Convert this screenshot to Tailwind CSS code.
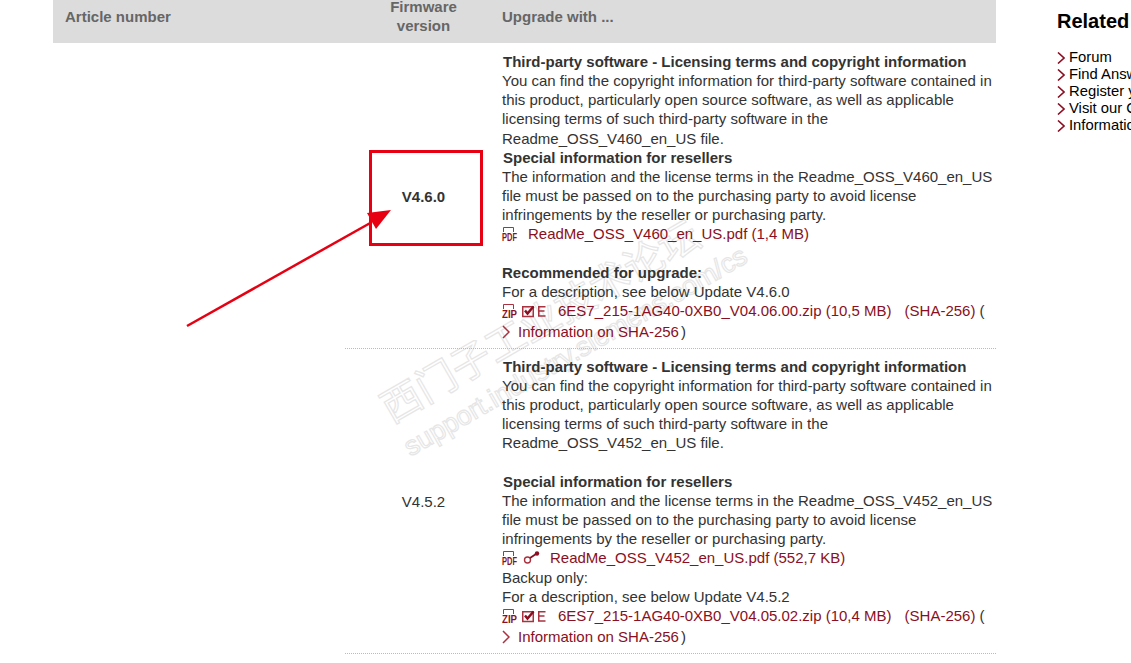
<!DOCTYPE html>
<html lang="en">
<head>
    <meta charset="UTF-8">
    <meta name="viewport" content="width=device-width, initial-scale=1.0">
    <title>Firmware versions</title>
    <script src="https://cdn.jsdelivr.net/npm/@tailwindcss/browser@4"></script>
</head>
<body class="relative h-[663px] w-[1131px] overflow-hidden bg-white font-['Liberation_Sans',Arial,sans-serif] text-[15px] leading-[19px] text-[#333333]">
    <!-- watermark -->
    <div class="absolute left-[383px] top-[387px] origin-left -rotate-30 whitespace-nowrap font-['Noto_Sans_CJK_SC',sans-serif] text-[40px] leading-[44px] text-transparent [-webkit-text-stroke:1.2px_#e6e6e6]">西门子工业技术论坛</div>
    <div class="absolute left-[406px] top-[434px] origin-left -rotate-30 whitespace-nowrap text-[27px] leading-[30px] text-transparent [-webkit-text-stroke:1.2px_#e6e6e6]">support.industry.siemens.com/cs</div>

    <div class="relative z-10 flex pl-[53px]">
        <div class="w-[943px] shrink-0">
            <!-- header -->
            <div class="grid h-[43px] grid-cols-[292px_157px_494px] grid-rows-[32px] items-center bg-[#dcdcdc] font-bold text-[#666666]">
                <div class="pl-[12px]">Article number</div>
                <div class="text-center">Firmware<br>version</div>
                <div>Upgrade with ...</div>
            </div>

            <div class="grid grid-cols-[292px_651px]">
                <div></div>
                <div>
                    <!-- V4.6.0 -->
                    <div class="grid h-[306px] grid-cols-[157px_494px] border-b border-dotted border-[#bbbbbb]">
                        <div class="flex items-center justify-center pt-px font-bold">V4.6.0</div>
                        <div class="pt-[9px]">
                            <div class="pl-px font-bold">Third-party software - Licensing terms and copyright information</div>
                            <div>You can find the copyright information for third-party software contained in<br>this product, particularly open source software, as well as applicable<br>licensing terms of such third-party software in the</div>
                            <div class="mt-px">Readme_OSS_V460_en_US file.</div>
                            <div class="pl-px font-bold">Special information for resellers</div>
                            <div>The information and the license terms in the Readme_OSS_V460_en_US<br>file must be passed on to the purchasing party to avoid license<br>infringements by the reseller or purchasing party.</div>
                            <div class="flex h-[19px] items-center text-[#8a0f22]">
                                <svg class="w-[18px] h-[16px] shrink-0" viewBox="0 0 18 16"><path d="M1.5 6V1.5H11.5V6" fill="none" stroke="#a8323f"/><text x="0" y="15" font-family="Liberation Sans" font-size="10.500" font-weight="700" textLength="15" lengthAdjust="spacingAndGlyphs" fill="#8a0f22">PDF</text></svg>
                                <span class="ml-[8px]">ReadMe_OSS_V460_en_US.pdf (1,4 MB)</span>
                            </div>
                            <div class="h-[20px]"></div>
                            <div class="font-bold">Recommended for upgrade:</div>
                            <div>For a description, see below Update V4.6.0</div>
                            <div class="flex h-[19px] items-center text-[#8a0f22]">
                                <svg class="w-[18px] h-[16px] shrink-0" viewBox="0 0 18 16"><path d="M1.5 6V1.5H11.5V6" fill="none" stroke="#a8323f"/><text x="0" y="15" font-family="Liberation Sans" font-size="10.500" font-weight="700" textLength="15" lengthAdjust="spacingAndGlyphs" fill="#8a0f22">ZIP</text></svg>
                                <svg class="ml-[2px] w-[25px] h-[14px] shrink-0" viewBox="0 0 25 14"><path d="M.75 2.750H11.250V12.500H.75Z" fill="none" stroke="#a8323f" stroke-width="1.500"/><path d="M3 6.500L5.500 9.500L11.500 2.500" fill="none" stroke="#8a0f22" stroke-width="2.500"/><path d="M23.500 2.750H16.750V12H23.500M16.750 7H22.500" fill="none" stroke="#a8323f" stroke-width="1.500"/></svg>
                                <span class="ml-[11px]">6ES7_215-1AG40-0XB0_V04.06.00.zip (10,5 MB)</span>
                                <span class="ml-[13px]">(SHA-256)</span>
                                <span class="ml-[4px] text-[#333333]">(</span>
                            </div>
                            <div class="flex h-[23px] items-center">
                                <svg class="w-[8px] h-[14px] shrink-0" viewBox="0 0 8 14"><path d="M1 1L7 7L1 13" fill="none" stroke="#a8323f" stroke-width="1.500"/></svg>
                                <span class="ml-[8px] text-[#8a0f22]">Information on SHA-256</span>
                                <span class="ml-[2px]">)</span>
                            </div>
                        </div>
                    </div>

                    <!-- V4.5.2 -->
                    <div class="grid h-[305px] grid-cols-[157px_494px] border-b border-dotted border-[#bbbbbb]">
                        <div class="flex items-center justify-center pt-px">V4.5.2</div>
                        <div class="pt-[8px]">
                            <div class="pl-px font-bold">Third-party software - Licensing terms and copyright information</div>
                            <div>You can find the copyright information for third-party software contained in<br>this product, particularly open source software, as well as applicable<br>licensing terms of such third-party software in the<br>Readme_OSS_V452_en_US file.</div>
                            <div class="h-[20px]"></div>
                            <div class="pl-px font-bold">Special information for resellers</div>
                            <div>The information and the license terms in the Readme_OSS_V452_en_US<br>file must be passed on to the purchasing party to avoid license<br>infringements by the reseller or purchasing party.</div>
                            <div class="flex h-[19px] items-center text-[#8a0f22]">
                                <svg class="w-[18px] h-[16px] shrink-0" viewBox="0 0 18 16"><path d="M1.5 6V1.5H11.5V6" fill="none" stroke="#a8323f"/><text x="0" y="15" font-family="Liberation Sans" font-size="10.500" font-weight="700" textLength="15" lengthAdjust="spacingAndGlyphs" fill="#8a0f22">PDF</text></svg>
                                <svg class="ml-[3px] w-[18px] h-[14px] shrink-0" viewBox="0 0 18 14"><circle cx="4.500" cy="9" r="3" fill="none" stroke="#a8323f" stroke-width="1.400"/><path d="M7 7L13 3" stroke="#8a0f22" stroke-width="1.800"/><circle cx="14" cy="2.500" r="2.200" fill="#8a0f22"/></svg>
                                <span class="ml-[9px]">ReadMe_OSS_V452_en_US.pdf (552,7 KB)</span>
                            </div>
                            <div class="mt-px">Backup only:</div>
                            <div>For a description, see below Update V4.5.2</div>
                            <div class="flex h-[19px] items-center text-[#8a0f22]">
                                <svg class="w-[18px] h-[16px] shrink-0" viewBox="0 0 18 16"><path d="M1.5 6V1.5H11.5V6" fill="none" stroke="#a8323f"/><text x="0" y="15" font-family="Liberation Sans" font-size="10.500" font-weight="700" textLength="15" lengthAdjust="spacingAndGlyphs" fill="#8a0f22">ZIP</text></svg>
                                <svg class="ml-[2px] w-[25px] h-[14px] shrink-0" viewBox="0 0 25 14"><path d="M.75 2.750H11.250V12.500H.75Z" fill="none" stroke="#a8323f" stroke-width="1.500"/><path d="M3 6.500L5.500 9.500L11.500 2.500" fill="none" stroke="#8a0f22" stroke-width="2.500"/><path d="M23.500 2.750H16.750V12H23.500M16.750 7H22.500" fill="none" stroke="#a8323f" stroke-width="1.500"/></svg>
                                <span class="ml-[11px]">6ES7_215-1AG40-0XB0_V04.05.02.zip (10,4 MB)</span>
                                <span class="ml-[13px]">(SHA-256)</span>
                                <span class="ml-[4px] text-[#333333]">(</span>
                            </div>
                            <div class="flex h-[23px] items-center">
                                <svg class="w-[8px] h-[14px] shrink-0" viewBox="0 0 8 14"><path d="M1 1L7 7L1 13" fill="none" stroke="#a8323f" stroke-width="1.500"/></svg>
                                <span class="ml-[8px] text-[#8a0f22]">Information on SHA-256</span>
                                <span class="ml-[2px]">)</span>
                            </div>
                        </div>
                    </div>
                </div>
            </div>
        </div>

        <!-- sidebar -->
        <div class="ml-[61px] w-[200px] shrink-0 pt-[9px] text-black">
            <h2 class="text-[20px] leading-[24px] font-bold">Related</h2>
            <ul class="mt-[16px] whitespace-nowrap text-[14.8px] leading-[17px]">
                <li class="flex items-center gap-[4px]"><svg class="w-[8px] h-[12px] shrink-0" viewBox="0 0 8 12"><path d="M1 .5L7 6L1 11.500" fill="none" stroke="#8a0f22" stroke-width="1.600"/></svg>Forum</li>
                <li class="flex items-center gap-[4px]"><svg class="w-[8px] h-[12px] shrink-0" viewBox="0 0 8 12"><path d="M1 .5L7 6L1 11.500" fill="none" stroke="#8a0f22" stroke-width="1.600"/></svg>Find Answers</li>
                <li class="flex items-center gap-[4px]"><svg class="w-[8px] h-[12px] shrink-0" viewBox="0 0 8 12"><path d="M1 .5L7 6L1 11.500" fill="none" stroke="#8a0f22" stroke-width="1.600"/></svg>Register your product</li>
                <li class="flex items-center gap-[4px]"><svg class="w-[8px] h-[12px] shrink-0" viewBox="0 0 8 12"><path d="M1 .5L7 6L1 11.500" fill="none" stroke="#8a0f22" stroke-width="1.600"/></svg>Visit our Community</li>
                <li class="flex items-center gap-[4px]"><svg class="w-[8px] h-[12px] shrink-0" viewBox="0 0 8 12"><path d="M1 .5L7 6L1 11.500" fill="none" stroke="#8a0f22" stroke-width="1.600"/></svg>Information</li>
            </ul>
        </div>
    </div>

    <!-- red annotation on top of the screenshot -->
    <div class="absolute left-[369px] top-[150px] z-20 h-[96px] w-[114px] border-[3px] border-[#e60012]"></div>
    <svg class="absolute left-[180px] top-[200px] z-20 w-[220px] h-[130px]" viewBox="0 0 220 130">
        <path d="M7 126L192 22" stroke="#e60012" stroke-width="2.500"/>
        <path d="M211 10L187 13L196 29Z" fill="#e60012"/>
    </svg>
</body>
</html>
